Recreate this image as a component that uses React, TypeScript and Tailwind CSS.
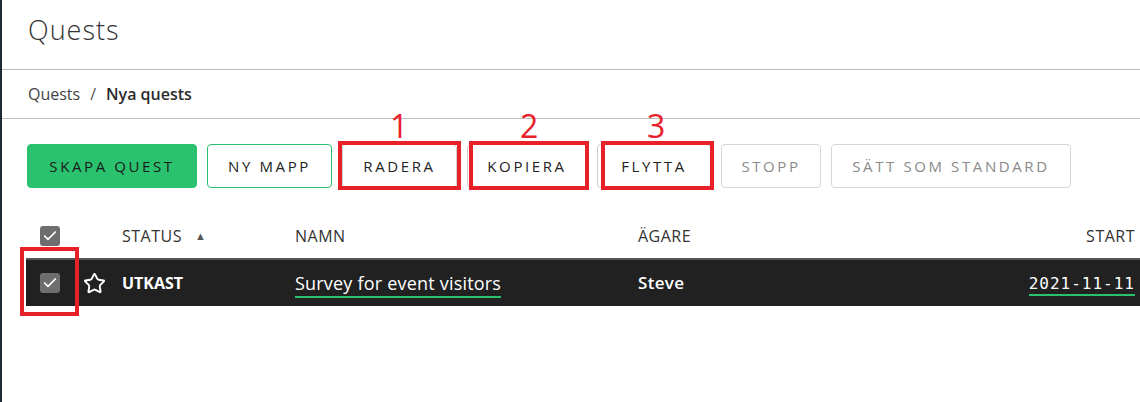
import { Check, Star } from 'lucide-react';

const font = { fontFamily: '"Open Sans", "Noto Sans", sans-serif' };

function Annotation({ n, frame, num }: { n: string; frame: string; num: string }) {
  return (
    <>
      <span className={`pointer-events-none absolute border-4 border-[#e8202a] ${frame}`} />
      <span className={`pointer-events-none absolute text-[32px] leading-none text-[#e8202a] ${num}`}>{n}</span>
    </>
  );
}

function Box() {
  return (
    <span className="flex h-5 w-5 items-center justify-center rounded-[3px] bg-[#6e6e6e]">
      <Check className="h-4 w-4 text-white" strokeWidth={2.5} />
    </span>
  );
}

export default function App() {
  const outline = 'h-11 rounded-[4px] border text-[15px] tracking-[2.6px] flex items-center justify-center';

  return (
    <div className="flex min-h-[402px] bg-white text-[#2b2b2b]" style={font}>
      <div className="w-[2px] shrink-0 bg-[#1c2b33]" />
      <div className="flex-1">
        {/* Title */}
        <div className="flex h-[70px] items-center border-b border-[#bdbdbd] pl-[26px] pb-[8px]">
          <h1 className="text-[27px] font-light tracking-[1px] text-[#333]">Quests</h1>
        </div>

        {/* Breadcrumb */}
        <div className="flex h-[49px] items-center gap-[10px] border-b border-[#bdbdbd] pl-[26px] text-[16px]">
          <span className="text-[#444]">Quests</span>
          <span className="text-[#555]">/</span>
          <span className="font-semibold text-[#2b2b2b]">Nya quests</span>
        </div>

        {/* Actions */}
        <div className="flex gap-[10px] pl-[25px] pt-[25px]">
          <button className={`${outline} w-[170px] border-[#2bc26f] bg-[#2bc26f] text-[#1a1a1a]`}>SKAPA QUEST</button>
          <button className={`${outline} w-[125px] border-[#2bc26f] text-[#222]`}>NY MAPP</button>
          <div className="relative">
            <button className={`${outline} w-[115px] border-[#cfcfcf] text-[#222]`}>RADERA</button>
            <Annotation n="1" frame="-left-[4px] -right-[4px] -top-[3px] -bottom-[2px]" num="left-[48px] -top-[34px]" />
          </div>
          <div className="relative">
            <button className={`${outline} w-[120px] border-[#cfcfcf] text-[#222]`}>KOPIERA</button>
            <Annotation n="2" frame="left-[2px] right-[-2px] -top-[3px] -bottom-[2px]" num="left-[53px] -top-[34px]" />
          </div>
          <div className="relative">
            <button className={`${outline} w-[114px] border-[#cfcfcf] text-[#222]`}>FLYTTA</button>
            <Annotation n="3" frame="left-[4px] right-[-3px] -top-[3px] -bottom-[2px]" num="left-[50px] -top-[34px]" />
          </div>
          <button className={`${outline} w-[100px] border-[#d6d6d6] text-[#8a8a8a]`}>STOPP</button>
          <button className={`${outline} w-[240px] border-[#d6d6d6] text-[#8a8a8a]`}>SÄTT SOM STANDARD</button>
        </div>

        {/* Table */}
        <div className="mt-[26px] ml-[24px]">
          <div className="flex h-[44px] items-center text-[16px] tracking-[0.5px] text-[#333]">
            <div className="w-[96px] pl-[14px]">
              <Box />
            </div>
            <div className="flex w-[173px] items-center gap-[13px]">
              STATUS <span className="text-[11px] text-[#555]">▲</span>
            </div>
            <div className="w-[343px]">NAMN</div>
            <div className="flex-1">ÄGARE</div>
            <div className="pr-[5px]">START</div>
          </div>
          <div className="relative flex h-[48px] items-center border-t-2 border-[#555] bg-[#212121] text-white">
            <span className="pointer-events-none absolute -left-[6px] -top-[13px] h-[69px] w-[59px] border-4 border-[#e8202a]" />
            <div className="flex w-[96px] items-center gap-[23px] pl-[14px]">
              <Box />
              <Star className="h-[23px] w-[23px] text-white" strokeWidth={2} />
            </div>
            <div className="w-[173px] text-[16px] font-bold">UTKAST</div>
            <div className="w-[343px]">
              <span className="border-b-2 border-[#2bc26f] pb-[1px] text-[18px] tracking-[0.2px]">Survey for event visitors</span>
            </div>
            <div className="flex-1 text-[17px] font-semibold tracking-[0.3px]">Steve</div>
            <div className="pr-[5px]">
              <span
                className="border-b-2 border-[#2bc26f] pb-[1px] text-[16px] tracking-[1px]"
                style={{ fontFamily: '"DejaVu Sans Mono", monospace' }}
              >
                2021-11-11
              </span>
            </div>
          </div>
        </div>
      </div>
    </div>
  );
}
